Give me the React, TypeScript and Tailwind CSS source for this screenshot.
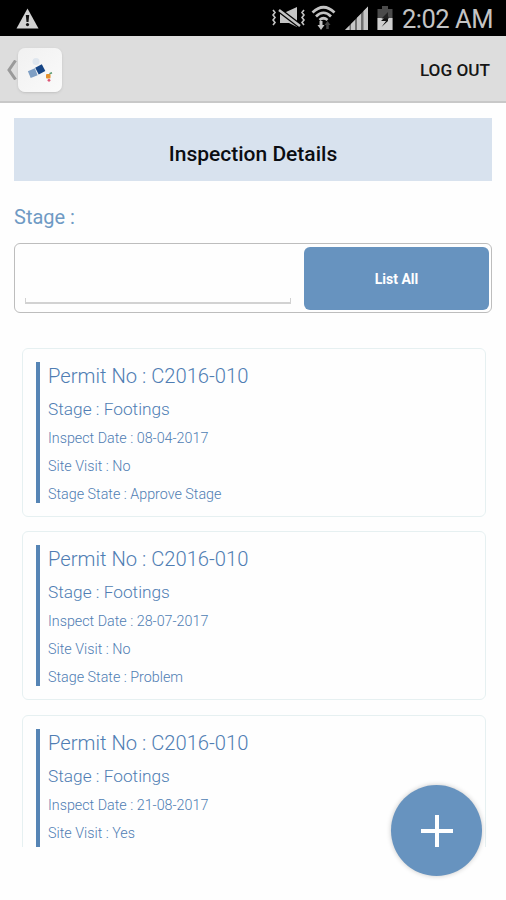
interface Inspection {
  id: number;
  permitNo: string;
  stage: string;
  inspectDate: string;
  siteVisit: string;
  stageState?: string;
}

const inspections: Inspection[] = [
  {
    id: 1,
    permitNo: "C2016-010",
    stage: "Footings",
    inspectDate: "08-04-2017",
    siteVisit: "No",
    stageState: "Approve Stage",
  },
  {
    id: 2,
    permitNo: "C2016-010",
    stage: "Footings",
    inspectDate: "28-07-2017",
    siteVisit: "No",
    stageState: "Problem",
  },
  {
    id: 3,
    permitNo: "C2016-010",
    stage: "Footings",
    inspectDate: "21-08-2017",
    siteVisit: "Yes",
  },
];

function StatusBar() {
  return (
    <div className="flex h-9 shrink-0 items-center bg-black pl-4 pr-3 text-[#c4c4c4]">
      <svg width="23" height="21" viewBox="0 0 23 21">
        <path d="M11.5 0.5 22.5 20.5H0.5Z" fill="#d2d2d2" />
        <path d="M9.8 7h3.4l-.7 7h-2Z" fill="#111" />
        <circle cx="11.5" cy="16.6" r="1.6" fill="#111" />
      </svg>
      <div className="flex-1" />
      {/* Vibrate / muted */}
      <svg width="34" height="22" viewBox="0 0 34 22" fill="none" stroke="currentColor">
        <path d="M1 3l2 2.500-2 2.500 2 2.500-2 2.500 2 2.500-2 2.500M32 3l-2 2.500 2 2.500-2 2.500 2 2.500-2 2.500 2 2.500" strokeWidth="1.600" />
        <path d="M8 5h6l11-5v20l-8-4H8Z" fill="currentColor" stroke="none" />
        <path d="M7 3 28 19" stroke="#000" strokeWidth="5" />
        <path d="M7 3 28 19" strokeWidth="2.400" />
      </svg>
      {/* Wifi with transfer arrows */}
      <svg className="ml-[5px]" width="25" height="26" viewBox="0 0 25 26" fill="none" stroke="currentColor">
        <path d="M1.5 7.5Q12.5-3 23.5 7.5M5 11.5Q12.5 4 20 11.5M8.5 15Q12.5 11.5 16.5 15" strokeWidth="2.700" />
        <path d="M10 16v6" strokeWidth="3" />
        <path d="M6.500 20h7L10 25Z" fill="currentColor" stroke="none" />
        <path d="M16.500 24v-5" stroke="#444" strokeWidth="2.500" />
        <path d="M13.500 20h6l-3-4Z" fill="#444" stroke="none" />
      </svg>
      {/* Signal */}
      <svg className="ml-[9px]" width="24" height="24" viewBox="0 0 24 24">
        <path d="M0 24 23 0.500V24Z" fill="#6f6f6f" />
        <path d="M0 24l4.500-4.500V24ZM6 18l4-4V24H6ZM12 11.800l4-4V24h-4ZM18.500 5l4.500-4.500V24h-4.500Z" fill="#c6c6c6" />
      </svg>
      {/* Battery */}
      <svg className="ml-[8px]" width="16" height="24" viewBox="0 0 16 24">
        <path d="M5 0h6v3h4.500v21H0.500V3H5Z" fill="#4b4b4b" />
        <path d="M0.500 12h15v12h-15Z" fill="#cfcfcf" />
        <path d="M4 15h5l-4.500 6 6.500-6V12H7Z" fill="#111" />
        <path d="M11 6 4.500 12.500H12L11 10Z" fill="#222" />
      </svg>
      <span className="ml-[9px] w-[92px] whitespace-nowrap pt-[4px] text-[25.500px] leading-none tracking-[-0.500px]">
        2:02 AM
      </span>
    </div>
  );
}

function AppBar() {
  return (
    <div className="flex h-[67px] shrink-0 items-center border-b-2 border-[#c8c8c8] bg-[#dddddd] pl-[6px] pr-4 pt-[3px]">
      <svg width="11" height="20" viewBox="0 0 11 20" fill="none" stroke="#9a9a9a" strokeWidth="3">
        <path d="M9.500 0.500 3 10l6.500 9.500" />
      </svg>
      <div className="ml-px h-11 w-11 rounded-[7px] bg-linear-to-br from-[#f1f1f1] to-[#fafafa] shadow-sm">
        <svg width="44" height="44" viewBox="0 0 44 44">
          <circle cx="18" cy="13.500" r="3.500" fill="#dfe6ee" />
          <rect x="11" y="21.500" width="7.500" height="7.500" transform="rotate(-22 14.700 25.200)" fill="#7f9fc4" />
          <rect x="18.500" y="17.700" width="7.500" height="7.500" transform="rotate(-28 22.200 21.400)" fill="#164585" />
          <rect x="28" y="26" width="4.500" height="4.500" rx="1" fill="#e5912c" />
          <path d="M31.500 25.800l2.500-1" stroke="#5b9a73" strokeWidth="1.500" />
          <circle cx="31" cy="32.300" r="1.400" fill="#dc5575" />
        </svg>
      </div>
      <div className="flex-1" />
      <button className="pt-[2px] text-[17.200px] font-medium leading-none text-[#161616]">
        LOG OUT
      </button>
    </div>
  );
}

function InspectionCard({ item }: { item: Inspection }) {
  return (
    <div className="flex h-[169px] shrink-0 rounded-[6px] border border-[#e6f0f1] px-[13px] py-[13px]">
      <div className="h-[141px] w-1 shrink-0 bg-[#5685b5]" />
      <div className="ml-2 flex flex-col whitespace-nowrap font-light text-[#4f7db3]">
        <div className="h-7 text-[20.200px] leading-7">Permit No : {item.permitNo}</div>
        <div className="mt-[7px] h-6 text-[17.300px] leading-6">Stage : {item.stage}</div>
        <div className="mt-2 flex flex-col gap-[10px] text-[14.300px] leading-[18px]">
          <div>Inspect Date : {item.inspectDate}</div>
          <div>Site Visit : {item.siteVisit}</div>
          {item.stageState && <div>Stage State : {item.stageState}</div>}
        </div>
      </div>
    </div>
  );
}

export default function App() {
  return (
    <div className="relative flex h-[900px] w-[506px] flex-col overflow-hidden bg-[#fefefe] font-[Roboto,sans-serif]">
      <StatusBar />
      <AppBar />

      <div className="mx-[14px] mt-[15px] flex h-[63px] shrink-0 items-center justify-center bg-[#d8e2ee] pt-[9px]">
        <h1 className="text-[21px] font-medium leading-none text-[#0b0d12]">
          Inspection Details
        </h1>
      </div>

      <label className="ml-[14px] mt-[22px] h-7 shrink-0 text-[20px] leading-7 text-[#6f9ac4]">
        Stage :
      </label>

      {/* Filter */}
      <div className="mx-[14px] mt-3 flex h-[70px] shrink-0 justify-between rounded-[6px] border border-[#bdbdbd] py-[3px] pl-[10px] pr-[2px]">
        <div className="flex w-[266px] flex-col justify-end pb-[5px]">
          <div className="h-[6px] border-x border-b-2 border-[#d2d2d2]" />
        </div>
        <button className="h-[63px] w-[185px] rounded-[6px] bg-[#6793bf] pt-px text-[14px] font-bold text-white">
          List All
        </button>
      </div>

      <div className="ml-[22px] mr-5 mt-[34.900px] flex h-[499px] shrink-0 flex-col gap-[14.500px] overflow-hidden">
        {inspections.map((item) => (
          <InspectionCard key={item.id} item={item} />
        ))}
      </div>

      <button className="absolute left-[391px] top-[785px] flex h-[91px] w-[91px] items-center justify-center rounded-full bg-[#6793bf] shadow-[0_0_5px_rgba(0,0,0,0.22)]">
        <svg width="32" height="32" viewBox="0 0 32 32" stroke="#fff" strokeWidth="4">
          <path d="M16 0v32M0 16h32" />
        </svg>
      </button>
    </div>
  );
}
